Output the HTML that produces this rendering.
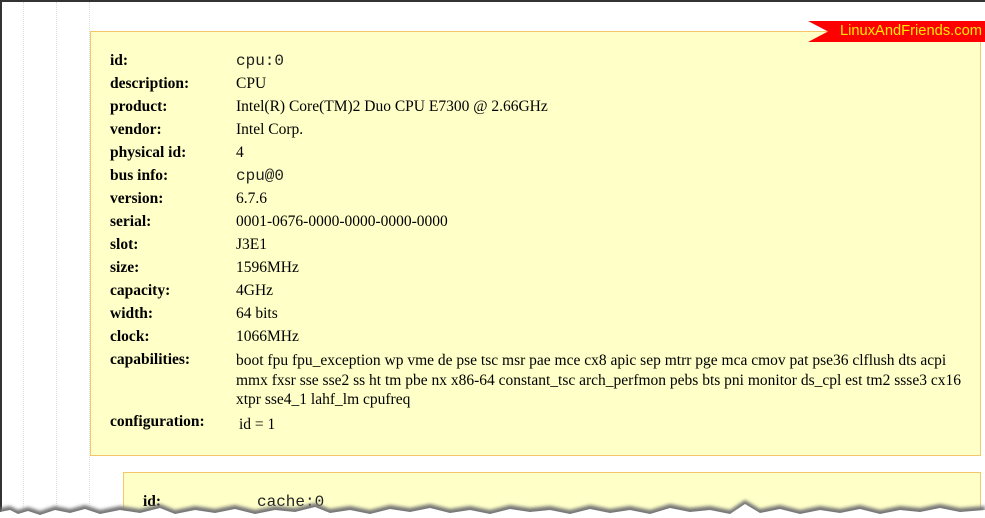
<!DOCTYPE html>
<html><head><style>
html,body{margin:0;width:985px;height:518px;overflow:hidden}
body{background:#fff;position:relative;font-family:"Liberation Serif",serif;font-size:15.5px;color:#000}
.top{position:absolute;left:0;top:0;width:985px;height:2px;background:#333}
.left{position:absolute;left:0;top:0;width:2px;height:518px;background:#333}
.dot{position:absolute;top:2px;height:516px;border-left:1px dotted #ddd}
.box{position:absolute;background:#ffffc8;border:1px solid #f5c768;box-sizing:border-box;overflow:hidden}
.row{position:absolute;left:19px;white-space:nowrap}
.row b{position:absolute;left:0}
.row span{position:absolute;left:126px}
.m{font-family:"Liberation Mono",monospace;font-size:16px;color:#222}
.tag{position:absolute;left:808px;top:21px;width:177px;height:21px;background:#f00;clip-path:polygon(0 0,100% 0,100% 100%,0 100%,20px 50%);color:#ffea00;font-family:"Liberation Sans",sans-serif;font-size:14.7px;line-height:21px;text-align:right;padding-right:3px;box-sizing:border-box}
</style></head><body>
<div class="top"></div><div class="left"></div>
<div class="dot" style="left:23px"></div><div class="dot" style="left:56px"></div><div class="dot" style="left:89px"></div>
<div class="box" style="left:90px;top:31px;width:891px;height:425px">
<div class="row" style="top:20px"><b>id:</b><span class="m">cpu:0</span></div>
<div class="row" style="top:43px"><b>description:</b><span>CPU</span></div>
<div class="row" style="top:66px"><b>product:</b><span>Intel(R) Core(TM)2 Duo CPU E7300 @ 2.66GHz</span></div>
<div class="row" style="top:89px"><b>vendor:</b><span>Intel Corp.</span></div>
<div class="row" style="top:112px"><b>physical id:</b><span>4</span></div>
<div class="row" style="top:135px"><b>bus info:</b><span class="m">cpu@0</span></div>
<div class="row" style="top:158px"><b>version:</b><span>6.7.6</span></div>
<div class="row" style="top:181px"><b>serial:</b><span>0001-0676-0000-0000-0000-0000</span></div>
<div class="row" style="top:204px"><b>slot:</b><span>J3E1</span></div>
<div class="row" style="top:227px"><b>size:</b><span>1596MHz</span></div>
<div class="row" style="top:250px"><b>capacity:</b><span>4GHz</span></div>
<div class="row" style="top:273px"><b>width:</b><span>64 bits</span></div>
<div class="row" style="top:296px"><b>clock:</b><span>1066MHz</span></div>
<div class="row" style="top:319px"><b>capabilities:</b><span style="white-space:normal;width:730px;line-height:19.5px">boot fpu fpu_exception wp vme de pse tsc msr pae mce cx8 apic sep mtrr pge mca cmov pat pse36 clflush dts acpi mmx fxsr sse sse2 ss ht tm pbe nx x86-64 constant_tsc arch_perfmon pebs bts pni monitor ds_cpl est tm2 ssse3 cx16 xtpr sse4_1 lahf_lm cpufreq</span></div>
<div class="row" style="top:381px"><b>configuration:</b><span style="left:129px;top:3px">id = 1</span></div>
</div>
<div class="box" style="left:123px;top:472px;width:858px;height:60px">
<div class="row" style="top:20px"><b>id:</b><span class="m" style="left:114px">cache:0</span></div>
</div>
<div class="tag">LinuxAndFriends.com</div>
<svg style="position:absolute;left:0;top:494px" width="985" height="24">
<defs><filter id="f"><feGaussianBlur stdDeviation="1.5"/></filter></defs>
<path filter="url(#f)" fill="#777" d="M0 14 L10 12 L18 16 L28 13 L40 17 L55 12 L70 15 L85 11 L100 16 L120 12 L140 15 L160 10 L175 16 L195 12 L215 15 L235 11 L255 16 L275 12 L295 14 L315 9 L330 15 L350 12 L370 16 L390 11 L410 14 L430 10 L450 15 L470 12 L490 16 L510 11 L530 14 L550 12 L570 16 L590 11 L610 15 L630 12 L650 16 L670 10 L690 14 L710 12 L730 16 L745 6 L760 15 L780 11 L800 16 L820 12 L840 15 L860 11 L880 16 L900 12 L920 14 L940 10 L960 14 L985 12 L985 24 L0 24Z"/>
<path fill="#fff" d="M0 18 L10 16 L18 20 L28 17 L40 21 L55 16 L70 19 L85 15 L100 20 L120 16 L140 19 L160 14 L175 20 L195 16 L215 19 L235 15 L255 20 L275 16 L295 18 L315 13 L330 19 L350 16 L370 20 L390 15 L410 18 L430 14 L450 19 L470 16 L490 20 L510 15 L530 18 L550 16 L570 20 L590 15 L610 19 L630 16 L650 20 L670 14 L690 18 L710 16 L730 20 L745 10 L760 19 L780 15 L800 20 L820 16 L840 19 L860 15 L880 20 L900 16 L920 18 L940 14 L960 18 L985 16 L985 24 L0 24Z"/>
</svg>
</body></html>
